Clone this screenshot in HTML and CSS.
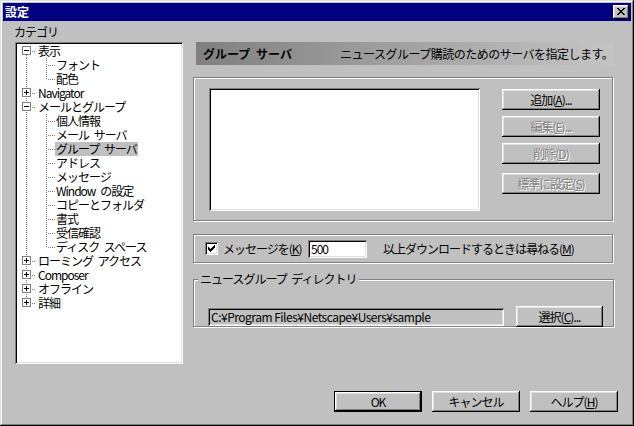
FILE: index.html
```html
<!DOCTYPE html>
<html>
<head>
    <title>設定</title>
    <link rel="stylesheet" href="styles.css">
</head>
<body>

<div class="window">
    <div class="titlebar">
        <span class="title">設定</span>
        <button class="close">
            <svg width="16" height="14" viewBox="0 0 16 14" shape-rendering="crispEdges"><path d="M4 3h2v1H4zM10 3h2v1h-2zM5 4h2v1H5zM9 4h2v1H9zM6 5h4v1H6zM7 6h2v1H7zM6 7h4v1H6zM5 8h2v1H5zM9 8h2v1H9zM4 9h2v1H4zM10 9h2v1h-2z" fill="#000"/></svg>
        </button>
    </div>

    <div class="main">
        <div class="left">
            <div class="cat-label">カテゴリ</div>
            <div class="tree">
                <div class="node"><span class="l1 first"><span class="box minus"></span></span><span class="text">表示</span></div>
                <div class="node"><span class="l1 pass"></span><span class="l2"></span><span class="text">フォント</span></div>
                <div class="node"><span class="l1 pass"></span><span class="l2 last"></span><span class="text">配色</span></div>
                <div class="node"><span class="l1"><span class="box plus"></span></span><span class="text">Navigator</span></div>
                <div class="node"><span class="l1"><span class="box minus"></span></span><span class="text">メールとグループ</span></div>
                <div class="node"><span class="l1 pass"></span><span class="l2"></span><span class="text">個人情報</span></div>
                <div class="node"><span class="l1 pass"></span><span class="l2"></span><span class="text">メール サーバ</span></div>
                <div class="node"><span class="l1 pass"></span><span class="l2"></span><span class="text selected">グループ サーバ</span></div>
                <div class="node"><span class="l1 pass"></span><span class="l2"></span><span class="text">アドレス</span></div>
                <div class="node"><span class="l1 pass"></span><span class="l2"></span><span class="text">メッセージ</span></div>
                <div class="node"><span class="l1 pass"></span><span class="l2"></span><span class="text">Window の設定</span></div>
                <div class="node"><span class="l1 pass"></span><span class="l2"></span><span class="text">コピーとフォルダ</span></div>
                <div class="node"><span class="l1 pass"></span><span class="l2"></span><span class="text">書式</span></div>
                <div class="node"><span class="l1 pass"></span><span class="l2"></span><span class="text">受信確認</span></div>
                <div class="node"><span class="l1 pass"></span><span class="l2 last"></span><span class="text">ディスク スペース</span></div>
                <div class="node"><span class="l1"><span class="box plus"></span></span><span class="text">ローミング アクセス</span></div>
                <div class="node"><span class="l1"><span class="box plus"></span></span><span class="text">Composer</span></div>
                <div class="node"><span class="l1"><span class="box plus"></span></span><span class="text">オフライン</span></div>
                <div class="node"><span class="l1 last"><span class="box plus"></span></span><span class="text">詳細</span></div>
            </div>
        </div>

        <div class="right">
            <div class="banner">
                <span class="banner-title">グループ サーバ</span>
                <span class="banner-desc">ニュースグループ購読のためのサーバを指定します。</span>
            </div>

            <div class="group servers">
                <div class="listbox"></div>
                <div class="btn-col">
                    <button class="btn">追加(<u>A</u>)...</button>
                    <button class="btn disabled">編集(<u>E</u>)...</button>
                    <button class="btn disabled">削除(<u>D</u>)</button>
                    <button class="btn disabled spaced">標準に設定(<u>S</u>)</button>
                </div>
            </div>

            <div class="group ask">
                <span class="checkbox">
                    <svg width="13" height="13" viewBox="0 0 13 13" shape-rendering="crispEdges"><path d="M9 3h1v1H9zM8 4h2v1H8zM3 5h1v1H3zM7 5h3v1H7zM3 6h2v1H3zM6 6h3v1H6zM3 7h5v1H3zM4 8h3v1H4zM5 9h1v1H5z" fill="#000"/></svg>
                </span>
                <span class="chk-label">メッセージを(<u>K</u>)</span>
                <span class="textbox">500</span>
                <span class="after">以上ダウンロードするときは尋ねる(<u>M</u>)</span>
            </div>

            <div class="group dir">
                <span class="legend">ニュースグループ ディレクトリ</span>
                <div class="dir-row">
                    <span class="path">C:¥Program Files¥Netscape¥Users¥sample</span>
                    <button class="btn select">選択(<u>C</u>)...</button>
                </div>
            </div>
        </div>
    </div>

    <div class="footer">
        <button class="btn wide default">OK</button>
        <button class="btn wide">キャンセル</button>
        <button class="btn wide">ヘルプ(<u>H</u>)</button>
    </div>
</div>

</body>
</html>
```

FILE: styles.css
```css
body {
    margin: 0;
    font-family: "Noto Sans CJK JP", sans-serif;
    font-size: 12px;
    letter-spacing: -1px;
    word-spacing: 3px;
    color: #000;
}
.window {
    width: 634px;
    height: 426px;
    box-sizing: border-box;
    padding: 3px;
    overflow: hidden;
    background-color: #c0c0c0;
    box-shadow: inset -1px -1px #000, inset 1px 1px #dfdfdf, inset -2px -2px #808080, inset 2px 2px #fff;
}
.titlebar {
    height: 18px;
    display: flex;
    align-items: center;
    justify-content: space-between;
    padding-left: 2px;
    background-color: #000080;
    color: #fff;
}
.title {
    font-weight: bold;
    line-height: 18px;
    letter-spacing: 0;
}
.close {
    width: 16px;
    height: 14px;
    margin-right: 2px;
    padding: 0;
    border: none;
    display: block;
    background-color: #c0c0c0;
    box-shadow: inset -1px -1px #000, inset 1px 1px #fff, inset -2px -2px #808080, inset 2px 2px #dfdfdf;
}
.close svg {
    display: block;
}

/* main area */
.main {
    display: flex;
    height: 343px;
}
.left {
    padding-left: 12px;
    width: 168px;
}
.cat-label {
    height: 21px;
    box-sizing: border-box;
    padding-top: 3px;
    margin-left: -1px;
    line-height: 16px;
}
.tree {
    height: 322px;
    box-sizing: border-box;
    padding: 2px;
    background-color: #fff;
    box-shadow: inset 1px 1px #808080, inset -1px -1px #fff, inset 2px 2px #000, inset -2px -2px #dfdfdf;
}
.node {
    display: flex;
    height: 14px;
    line-height: 14px;
    white-space: nowrap;
}
.l1, .l2 {
    display: block;
    height: 14px;
    flex: none;
    background-repeat: no-repeat;
}
.l1 {
    width: 20px;
    background-image:
        repeating-linear-gradient(#808080 0 1px, transparent 1px 2px),
        repeating-linear-gradient(to right, #808080 0 1px, transparent 1px 2px);
    background-size: 1px 14px, 4px 1px;
    background-position: 9px 0, 15px 7px;
}
.l1.first {
    background-size: 1px 7px, 4px 1px;
    background-position: 9px 7px, 15px 7px;
}
.l1.last {
    background-size: 1px 7px, 4px 1px;
    background-position: 9px 0, 15px 7px;
}
.l1.pass {
    background-size: 1px 14px, 0 0;
}
.l2 {
    width: 18px;
    background-image:
        repeating-linear-gradient(#808080 0 1px, transparent 1px 2px),
        repeating-linear-gradient(to right, #808080 0 1px, transparent 1px 2px);
    background-size: 1px 14px, 7px 1px;
    background-position: 9px 0, 11px 7px;
}
.l2.last {
    background-size: 1px 8px, 7px 1px;
}
.box {
    display: block;
    width: 9px;
    height: 9px;
    box-sizing: border-box;
    margin: 2px 0 0 5px;
    border: 1px solid #808080;
    background-color: #fff;
    background-repeat: no-repeat;
}
.box.minus {
    background-image: linear-gradient(#000, #000);
    background-size: 5px 1px;
    background-position: 1px 3px;
}
.box.plus {
    background-image: linear-gradient(#000, #000), linear-gradient(#000, #000);
    background-size: 5px 1px, 1px 5px;
    background-position: 1px 3px, 3px 1px;
}
.text {
    padding: 0 1px;
}
.text.selected {
    background-color: #c0c0c0;
}

/* right side */
.right {
    width: 421px;
    margin-left: 10px;
    padding-top: 21px;
}
.banner {
    height: 23px;
    margin-left: 3px;
    display: flex;
    line-height: 23px;
    background: linear-gradient(to right, #808080, #c4c4c4);
    white-space: nowrap;
}
.banner-title {
    width: 144px;
    padding-left: 7px;
    box-sizing: border-box;
    font-weight: bold;
    letter-spacing: 0;
}
.banner-desc {
    letter-spacing: -0.5px;
}
.group {
    box-sizing: border-box;
    border: 1px solid #808080;
    box-shadow: inset 1px 1px #fff, 1px 1px #fff;
}
.servers {
    width: 420px;
    height: 144px;
    margin-top: 12px;
    display: flex;
    padding: 10px 0 0 15px;
}
.listbox {
    width: 271px;
    height: 123px;
    background-color: #fff;
    box-shadow: inset 1px 1px #808080, inset -1px -1px #fff, inset 2px 2px #000, inset -2px -2px #dfdfdf;
}
.btn-col {
    display: flex;
    flex-direction: column;
    gap: 6px;
    margin: 1px 0 0 22px;
}
.btn {
    width: 98px;
    height: 21px;
    padding: 0;
    border: none;
    font-family: inherit;
    font-size: 12px;
    letter-spacing: -1px;
    color: #000;
    background-color: #c0c0c0;
    box-shadow: inset -1px -1px #000, inset 1px 1px #fff, inset -2px -2px #808080, inset 2px 2px #dfdfdf;
}
.btn.disabled {
    color: #808080;
    text-shadow: 1px 1px 0 #fff;
}
.btn.spaced {
    margin-top: 3px;
}
.ask {
    width: 420px;
    height: 29px;
    margin-top: 13px;
    display: flex;
    align-items: center;
    padding-left: 11px;
    white-space: nowrap;
}
.checkbox {
    width: 13px;
    height: 13px;
    margin-right: 5px;
    background-color: #fff;
    box-shadow: inset 1px 1px #808080, inset -1px -1px #fff, inset 2px 2px #000, inset -2px -2px #dfdfdf;
}
.checkbox svg {
    display: block;
}
.chk-label {
    width: 85px;
}
.textbox {
    width: 59px;
    height: 18px;
    box-sizing: border-box;
    padding: 0 3px;
    line-height: 18px;
    background-color: #fff;
    box-shadow: inset 1px 1px #808080, inset -1px -1px #fff, inset 2px 2px #000, inset -2px -2px #dfdfdf;
}
.after {
    margin-left: 16px;
}
.dir {
    width: 421px;
    height: 48px;
    margin-top: 16px;
}
.legend {
    display: inline-block;
    margin: -8px 0 0 4px;
    padding: 0 2px;
    line-height: 14px;
    vertical-align: top;
    background-color: #c0c0c0;
}
.dir-row {
    display: flex;
    align-items: center;
    margin-top: 9px;
    padding-left: 14px;
}
.path {
    width: 296px;
    height: 18px;
    box-sizing: border-box;
    padding: 0 3px;
    line-height: 18px;
    letter-spacing: -0.5px;
    word-spacing: 0;
    white-space: nowrap;
    box-shadow: inset 1px 1px #808080, inset -1px -1px #fff, inset 2px 2px #000, inset -2px -2px #dfdfdf;
}
.btn.select {
    width: 87px;
    margin-left: 12px;
}

/* footer */
.footer {
    display: flex;
    justify-content: flex-end;
    gap: 10px;
    margin-top: 27px;
    padding-right: 13px;
}
.btn.wide {
    width: 88px;
}
.btn.default {
    box-shadow: inset 0 0 0 1px #000, inset -2px -2px #000, inset 2px 2px #fff, inset -3px -3px #808080, inset 3px 3px #dfdfdf;
}
```
